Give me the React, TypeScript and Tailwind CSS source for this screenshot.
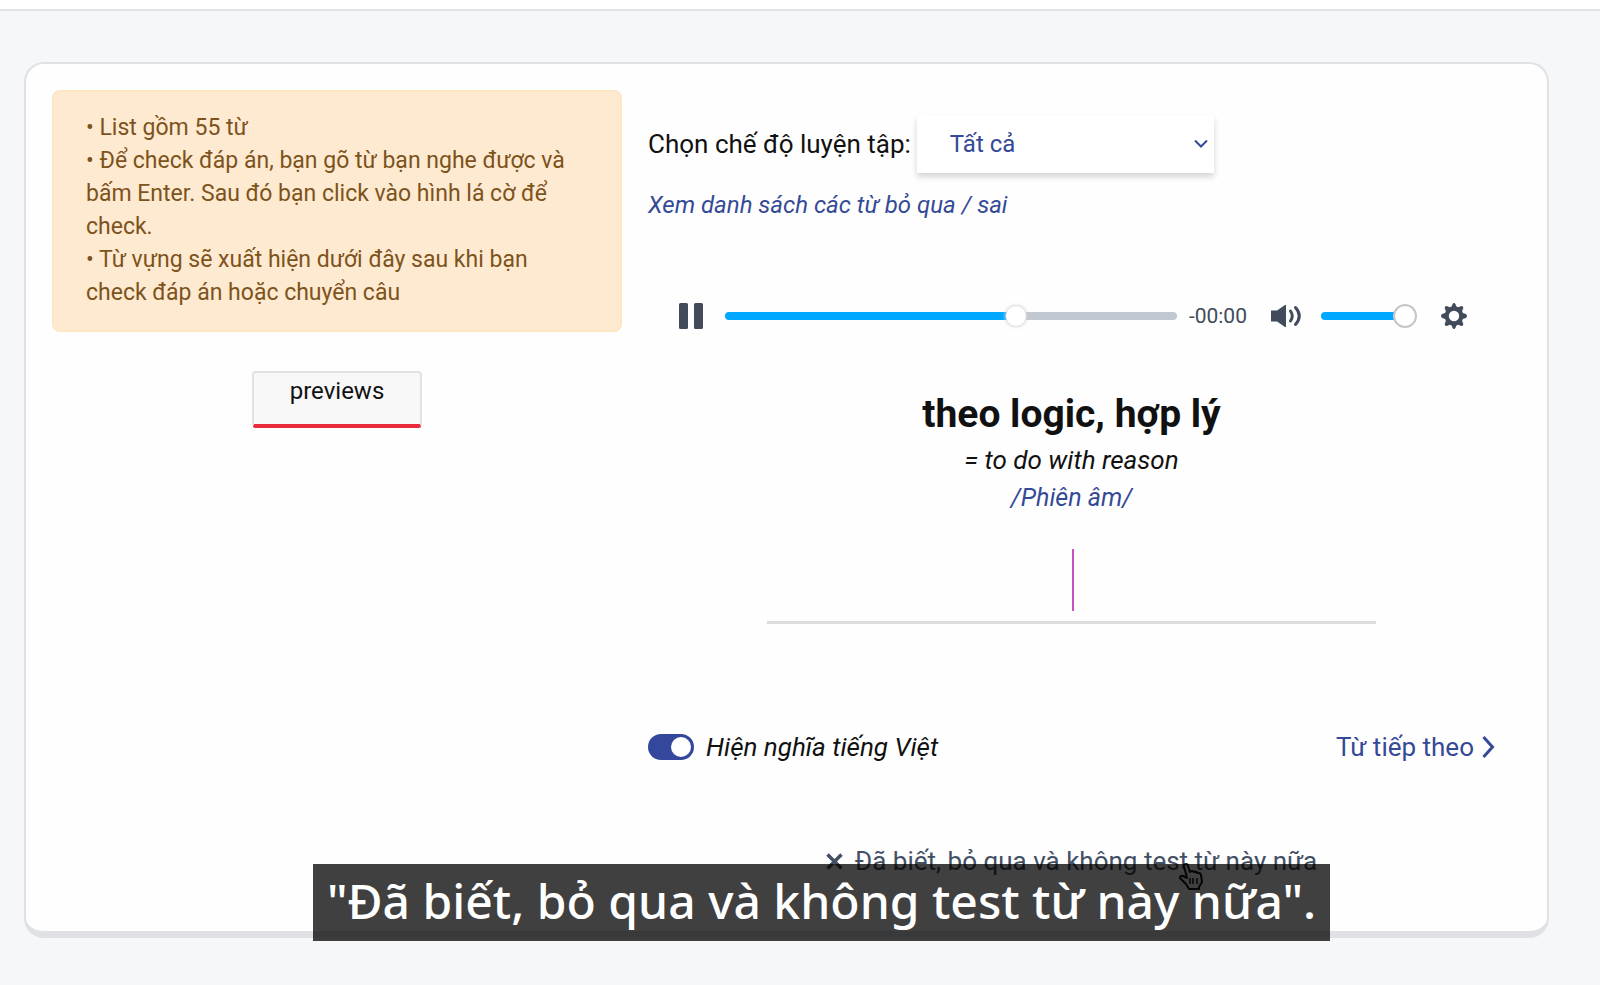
import { useState } from "react";
import { clsx } from "clsx";

const notes = [
  "List gồm 55 từ",
  "Để check đáp án, bạn gõ từ bạn nghe được và bấm Enter. Sau đó bạn click vào hình lá cờ để check.",
  "Từ vựng sẽ xuất hiện dưới đây sau khi bạn check đáp án hoặc chuyển câu",
];

const rangeClass =
  "h-2 cursor-pointer appearance-none rounded-full [&::-webkit-slider-thumb]:appearance-none [&::-webkit-slider-thumb]:rounded-full [&::-webkit-slider-thumb]:bg-white";

function GearIcon() {
  return (
    <svg width="26" height="26" viewBox="0 0 26 26" fill="currentColor" aria-hidden="true">
      <path
        fillRule="evenodd"
        d="M13 0q1 0 1.500 1.200l.9 2.300 1.900.8 2.300-1q1.400-.5 2.200.3t.3 2.200l-1 2.300.8 1.900 2.900 1.100q1.200.6 1.200 1.900t-1.200 1.900l-2.900 1.100-.8 1.900 1 2.300q.5 1.400-.3 2.200t-2.200.3l-2.300-1-1.900.8-.9 2.300Q14 26 13 26t-1.500-1.200l-.9-2.300-1.900-.8-2.300 1q-1.400.5-2.200-.3t-.3-2.200l1-2.300-.8-1.900-2.900-1.100Q0 14.300 0 13t1.200-1.900L4.100 10l.8-1.900-1-2.300q-.5-1.400.3-2.200t2.200-.3l2.300 1 1.900-.8.9-2.300Q12 0 13 0zm0 7.800a5.200 5.200 0 1 0 0 10.400 5.200 5.200 0 0 0 0-10.400z"
      />
    </svg>
  );
}

function VolumeIcon() {
  return (
    <svg width="30" height="26" viewBox="0 0 30 26" aria-hidden="true">
      <path d="M0 7.500h6l8-5.500h1v22h-1l-8-5.500H0z" fill="currentColor" />
      <g fill="none" stroke="currentColor" strokeWidth="3" strokeLinecap="round">
        <path d="M19.500 8q3.500 5 0 10" />
        <path d="M24.500 4.500q7.500 8.500 0 17" />
      </g>
    </svg>
  );
}

function Player() {
  const [volume, setVolume] = useState(100);

  return (
    <div className="mt-[79px] flex h-8 items-center pr-7 pl-[31px] text-[#414b5a]">
      <button type="button" aria-label="Pause" className="mr-[22px]">
        <svg width="24" height="26" viewBox="0 0 24 26" fill="currentColor" aria-hidden="true">
          <rect width="9" height="26" rx="1.500" />
          <rect x="15" width="9" height="26" rx="1.500" />
        </svg>
      </button>
      <input
        type="range"
        aria-label="Seek"
        defaultValue={65}
        className={clsx(
          rangeClass,
          "min-w-0 flex-1 bg-[linear-gradient(to_right,#00a8ff_65%,#c1c8d0_65%)] [&::-webkit-slider-thumb]:size-5 [&::-webkit-slider-thumb]:shadow-[0_0_3px_1px_#d9d4dc]",
        )}
      />
      <span className="ml-3 text-[21px] leading-8">-00:00</span>
      <button type="button" aria-label="Mute" className="ml-6">
        <VolumeIcon />
      </button>
      <input
        type="range"
        aria-label="Volume"
        value={volume}
        onChange={(e) => setVolume(Number(e.target.value))}
        className={clsx(
          rangeClass,
          "ml-5 w-24 bg-[linear-gradient(to_right,#00a8ff_85%,transparent_85%)] [&::-webkit-slider-thumb]:size-6 [&::-webkit-slider-thumb]:border-2 [&::-webkit-slider-thumb]:border-[#c6c6ca]",
        )}
      />
      <button type="button" aria-label="Settings" className="ml-6">
        <GearIcon />
      </button>
    </div>
  );
}

function HandCursor() {
  return (
    <svg
      className="absolute top-5 right-[114px]"
      width="24"
      height="27"
      viewBox="0 0 24 27"
      fill="#fff"
      stroke="#111"
      strokeWidth="2"
      strokeLinejoin="round"
      aria-hidden="true"
    >
      <path d="M8 15 5 3q0-2 2-2t2 2l2 6q2-2 4 0 2-1 3 1 3-1 4 2l1 7-3 5v2H10l-3-5-6-6q0-3 3-2z" />
      <path d="M11 15v6M14 15v6M18 15v6" strokeWidth="1.500" />
    </svg>
  );
}

export default function App() {
  const [showMeaning, setShowMeaning] = useState(true);
  const [answer, setAnswer] = useState("");

  return (
    <div className="relative min-h-screen bg-[#f5f7f9] font-['Roboto',sans-serif] text-[#111]">
      <header className="h-[11px] border-b-2 border-[#e2e4e6] bg-white" />
      <main className="pt-[51px] pr-[51px] pb-11 pl-6">
        <div className="grid grid-cols-[35fr_52fr] gap-[26px] rounded-[20px] border-2 border-b-[7px] border-[#dfe1e5] bg-[#fefefe] pt-[26px] pr-[52px] pb-[52px] pl-[26px]">
          <aside>
            <div className="rounded-lg border-2 border-[#fde6c4] bg-[#feead1] px-8 pt-[19px] pb-[21px] text-[23px] leading-[33px] text-[#7d531c]">
              {notes.map((note) => (
                <p key={note}>{`• ${note}`}</p>
              ))}
            </div>
            <div className="mt-[39px] flex justify-center">
              <button
                type="button"
                className="h-[57px] w-[170px] rounded-[4px] border-2 border-b-4 border-[#e2e2e4] border-b-[#e92b3b] bg-[#f8f8f8] pb-4 text-2xl"
              >
                previews
              </button>
            </div>
          </aside>

          <section className="pt-[25px]">
            <div className="flex items-center">
              <label htmlFor="mode" className="mr-1.5 text-[26px] leading-8">
                Chọn chế độ luyện tập:
              </label>
              <div className="relative">
                <select
                  id="mode"
                  className="h-[58px] w-[297px] appearance-none bg-white pl-[33px] text-2xl text-[#354a96] shadow-[0_4px_6px_rgba(0,0,0,0.16)]"
                >
                  <option>Tất cả</option>
                </select>
                <svg
                  className="pointer-events-none absolute top-6 right-1.5"
                  width="14"
                  height="10"
                  viewBox="0 0 14 10"
                  fill="none"
                  stroke="#354a96"
                  strokeWidth="2"
                  aria-hidden="true"
                >
                  <path d="m1 1.500 6 6 6-6" />
                </svg>
              </div>
            </div>
            <a href="#skipped" className="mt-4 block text-2xl leading-8 text-[#354a96] italic">
              Xem danh sách các từ bỏ qua / sai
            </a>

            <Player />

            <div className="mt-[58px] text-center">
              <h1 className="text-[39px] leading-[48px] font-bold">theo logic, hợp lý</h1>
              <p className="mt-1 text-[26px] leading-[37px] italic">= to do with reason</p>
              <p className="text-[25px] leading-[37px] text-[#354a96] italic">/Phiên âm/</p>
              <div className="relative mx-auto mt-[25px] w-[72%]">
                <input
                  type="text"
                  aria-label="Từ bạn nghe được"
                  value={answer}
                  onChange={(e) => setAnswer(e.target.value)}
                  className="block h-[83px] w-full border-b-[3px] border-[#dcdcdc] text-center text-5xl caret-[#c03fc0] outline-none"
                />
                {!answer && (
                  <span className="pointer-events-none absolute top-2 left-1/2 h-[62px] w-0.5 bg-[#c94fc4]" />
                )}
              </div>
            </div>

            <div className="mt-[105px] flex items-center justify-between text-[26px] leading-9">
              <label className="flex cursor-pointer items-center gap-3 italic">
                <input
                  type="checkbox"
                  role="switch"
                  checked={showMeaning}
                  onChange={() => setShowMeaning(!showMeaning)}
                  className="h-[26px] w-[46px] appearance-none rounded-full bg-gray-300 p-[3px] before:block before:size-5 before:rounded-full before:bg-white checked:bg-[#33479c] checked:before:ml-5"
                />
                Hiện nghĩa tiếng Việt
              </label>
              <a href="#next" className="flex items-center gap-2 text-[#354a96]">
                Từ tiếp theo
                <svg width="13" height="24" viewBox="0 0 13 24" fill="none" stroke="currentColor" strokeWidth="3" aria-hidden="true">
                  <path d="m1.500 2 9 10-9 10" />
                </svg>
              </a>
            </div>

            <div className="mt-[78px] flex justify-center">
              <button type="button" className="relative flex items-center gap-3 text-[26px] leading-9 text-[#435063]">
                <svg width="17" height="17" viewBox="0 0 17 17" stroke="currentColor" strokeWidth="3.500" aria-hidden="true">
                  <path d="m1.500 1.500 14 14m0-14-14 14" />
                </svg>
                Đã biết, bỏ qua và không test từ này nữa
                <HandCursor />
              </button>
            </div>
          </section>
        </div>
      </main>

      <div className="pointer-events-none absolute inset-x-0 bottom-11 flex justify-center pl-[43px]">
        <p className="h-[77px] bg-black/75 px-3.5 font-['Noto_Sans',sans-serif] text-5xl leading-[74px] font-medium whitespace-nowrap text-white">
          "Đã biết, bỏ qua và không test từ này nữa".
        </p>
      </div>
    </div>
  );
}
